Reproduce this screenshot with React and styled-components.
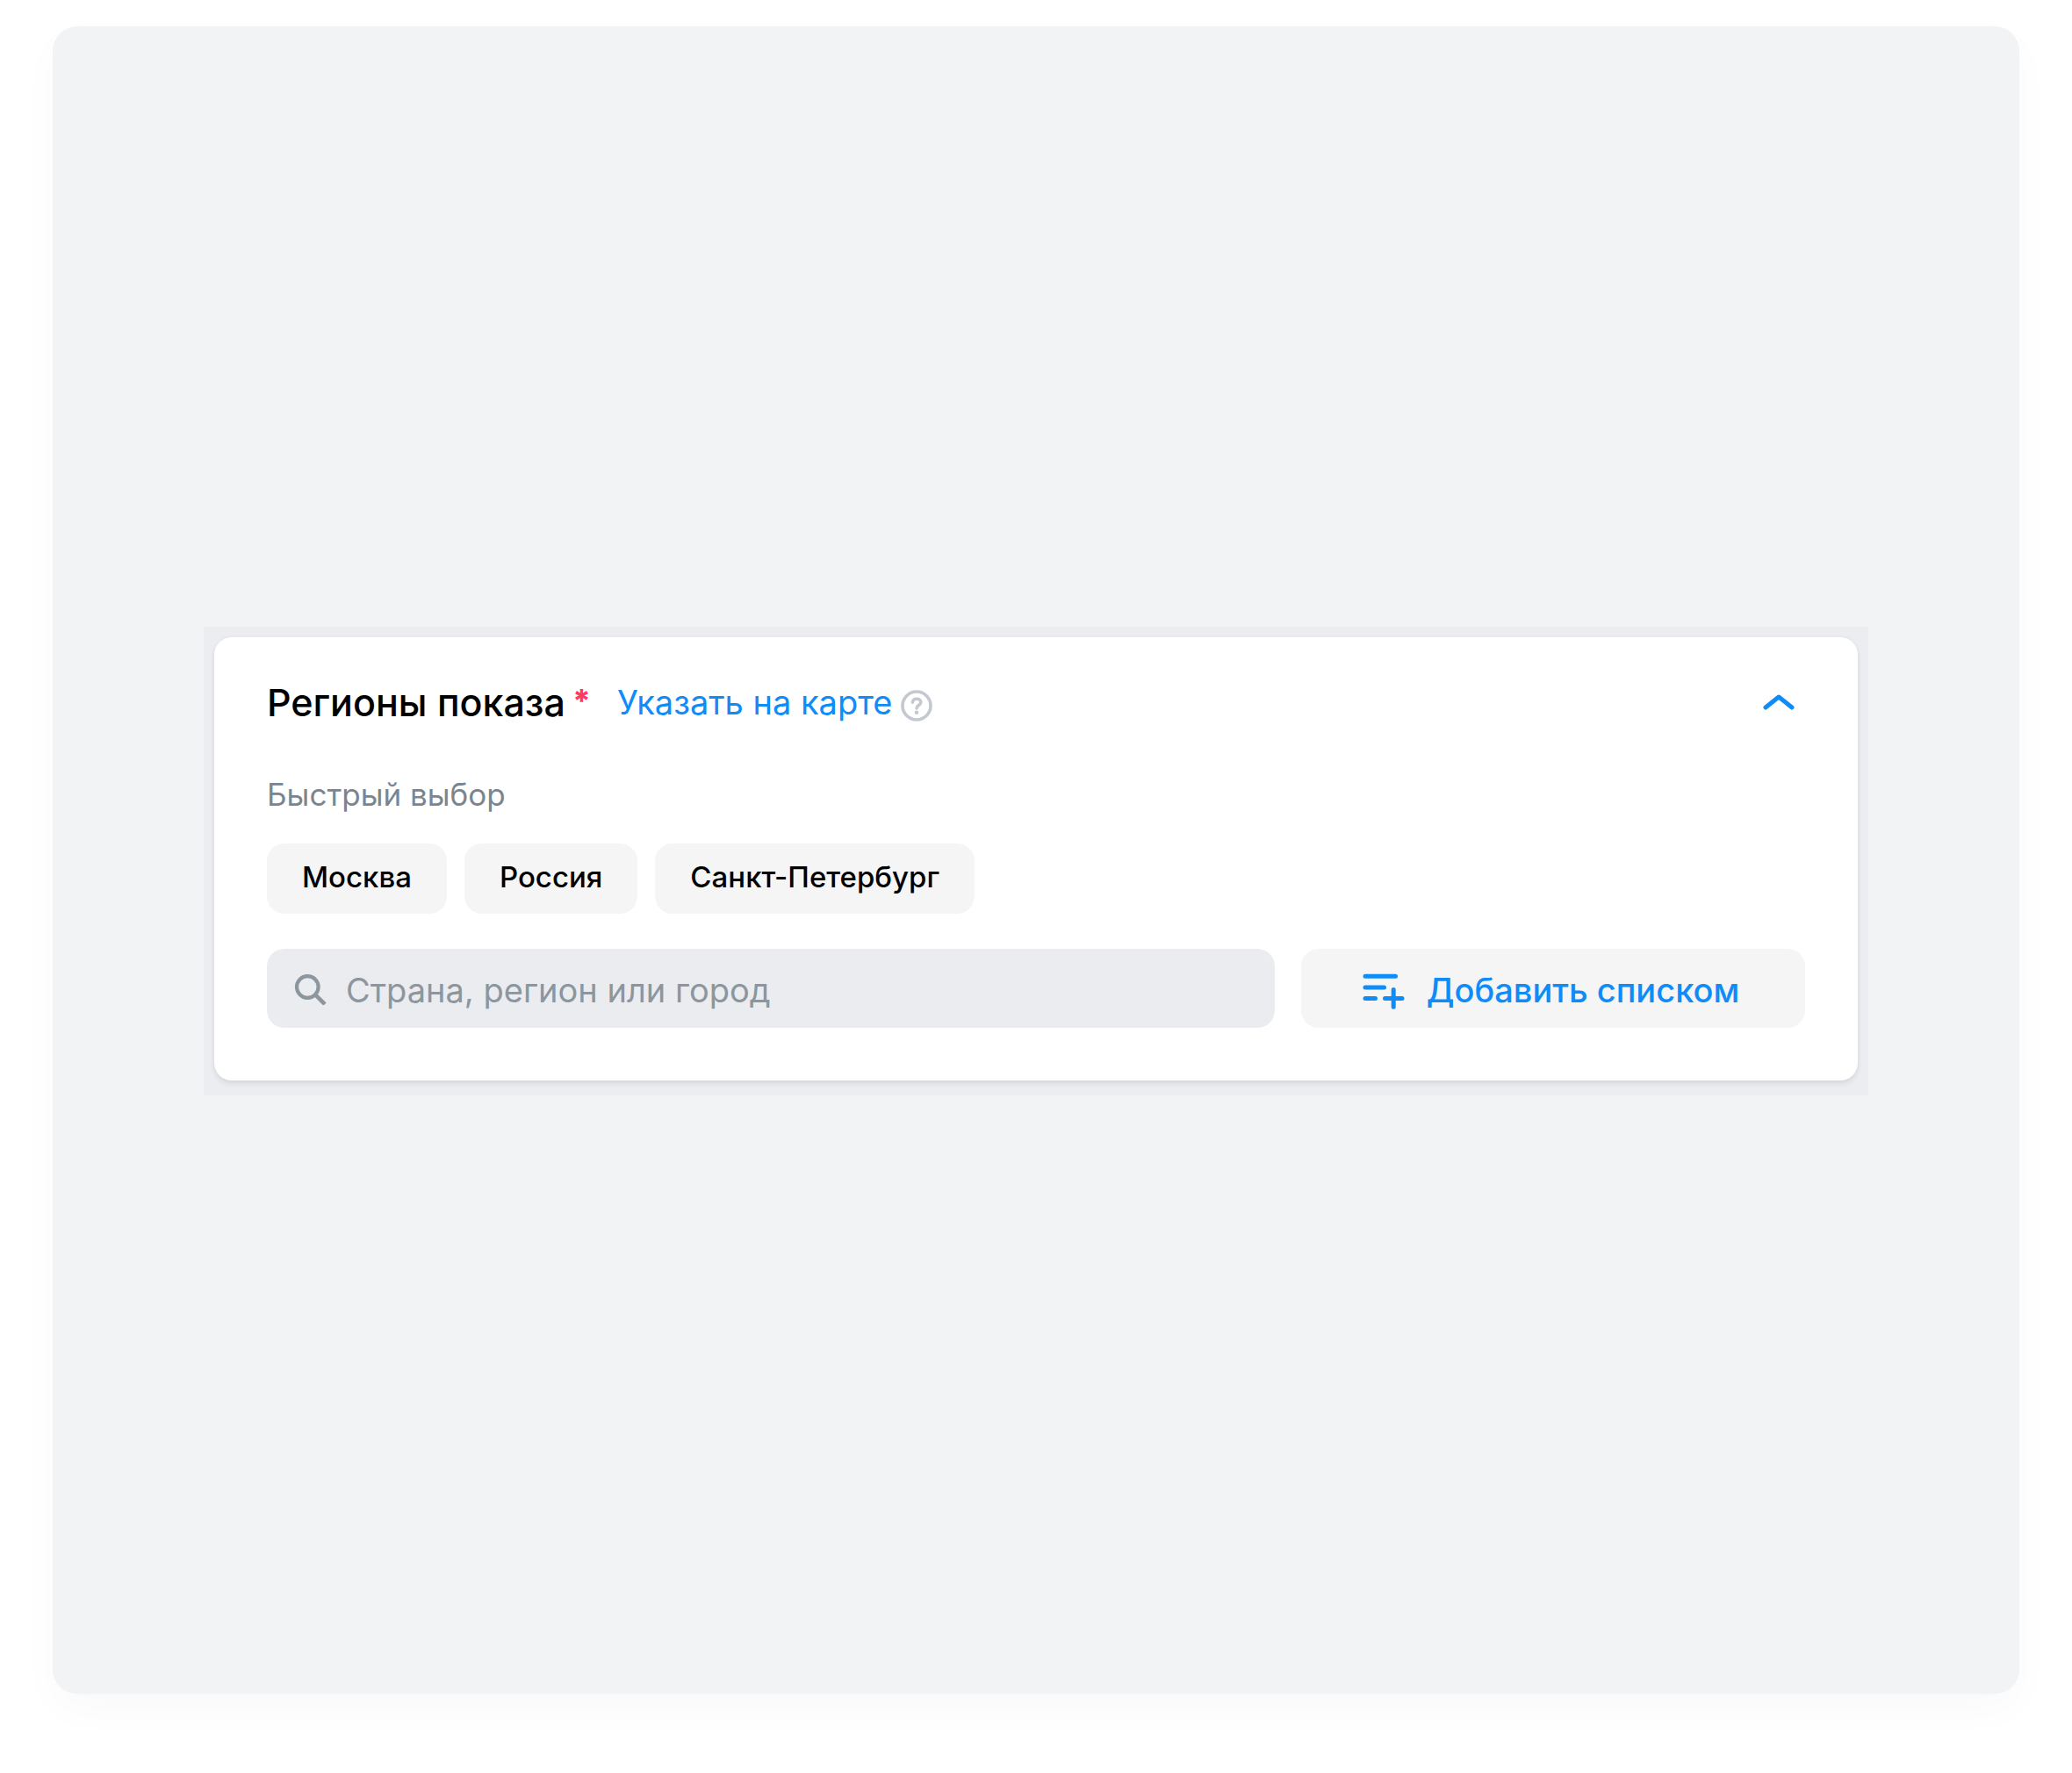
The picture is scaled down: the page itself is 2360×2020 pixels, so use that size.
// src/App.jsx
import React, { useState } from "react";
import styled, { createGlobalStyle } from "styled-components";

const GlobalStyle = createGlobalStyle`
  * {
    box-sizing: border-box;
  }

  body {
    margin: 0;
    background: #fff;
    font-family: Inter, "Noto Sans", sans-serif;
    color: #000;
  }

  button,
  input {
    font-family: inherit;
  }
`;

const Page = styled.div`
  display: flex;
  min-height: 100vh;
  padding: 30px 60px 90px;
`;

const Stage = styled.main`
  flex: 1;
  display: flex;
  flex-direction: column;
  justify-content: center;
  padding: 2px 172px 0;
  border-radius: 28px;
  background: #f1f3f5;
  box-shadow: 0 18px 48px rgba(0, 0, 0, 0.025);
`;

const Frame = styled.div`
  padding: 12px 12px 17px;
  background: #ebedf0;
`;

const Card = styled.section`
  padding: 44px 60px 60px;
  border-radius: 20px;
  background: #fff;
  box-shadow: 0 0 4px rgba(0, 16, 61, 0.04), 0 4px 6px rgba(0, 16, 61, 0.08);
`;

const Header = styled.header`
  display: flex;
  align-items: center;
  margin-bottom: 55px;
`;

const Title = styled.h2`
  display: flex;
  gap: 8px;
  margin: 0 30px 0 0;
  font-size: 43px;
  line-height: 60px;
  font-weight: 500;
`;

const Required = styled.span`
  color: #ff3962;
  font-size: 36px;
  line-height: 56px;
  font-weight: 800;
`;

const MapLink = styled.a`
  color: #0f8cf7;
  font-size: 38px;
  line-height: 60px;
  text-decoration: none;
`;

const IconButton = styled.button`
  display: flex;
  align-items: center;
  justify-content: center;
  width: ${({ $size }) => $size}px;
  height: ${({ $size }) => $size}px;
  padding: 0;
  border: none;
  background: none;
  color: ${({ $color }) => $color};
  cursor: pointer;
`;

const HelpButton = styled(IconButton)`
  margin: 8px auto 0 10px;
`;

const Caption = styled.p`
  margin: 0 0 36px;
  color: #7b858f;
  font-size: 35px;
  line-height: 40px;
`;

const Chips = styled.div`
  display: flex;
  flex-wrap: wrap;
  gap: 20px;
  margin-bottom: 40px;
`;

const Chip = styled.button`
  height: 80px;
  padding: 0 40px 4px;
  border: none;
  border-radius: 20px;
  background: #f5f5f5;
  color: #000;
  font-size: 33px;
  font-weight: 500;
  cursor: pointer;
`;

const SearchRow = styled.div`
  display: grid;
  grid-template-columns: 2fr 1fr;
  gap: 30px;
`;

const SearchField = styled.label`
  display: flex;
  align-items: center;
  gap: 22px;
  height: 90px;
  padding: 0 30px;
  border-radius: 20px;
  background: #ebecf0;
  color: #8c969f;
`;

const SearchInput = styled.input`
  flex: 1;
  min-width: 0;
  height: 90px;
  padding: 4px 0 0;
  border: none;
  outline: none;
  background: none;
  color: #000;
  font-size: 38px;

  &::placeholder {
    color: #8c969f;
    opacity: 1;
  }
`;

const AddButton = styled.button`
  display: flex;
  align-items: center;
  justify-content: center;
  gap: 24px;
  height: 90px;
  padding: 4px 26px 0 20px;
  border: none;
  border-radius: 20px;
  background: #f5f5f5;
  color: #0f8cf7;
  font-size: 38px;
  font-weight: 500;
  cursor: pointer;
`;

const HelpIcon = () => (
  <svg width="36" height="36" viewBox="0 0 36 36" fill="none" stroke="currentColor" aria-hidden="true">
    <circle cx="18" cy="18" r="16" strokeWidth="3.6" />
    <path d="M13.4 14.2C13.6 11.6 15.5 10.2 18.2 10.2C21 10.2 22.8 11.8 22.8 13.9C22.8 15.7 21.7 16.6 20.3 17.6C18.7 18.6 18.1 19.3 18.1 21" strokeWidth="3.6" strokeLinecap="round" />
    <circle cx="18" cy="25.8" r="2.3" fill="currentColor" stroke="none" />
  </svg>
);

const ChevronIcon = ({ open }) => (
  <svg width="40" height="24" viewBox="0 0 40 24" fill="none" stroke="currentColor" strokeWidth="5" strokeLinecap="round" strokeLinejoin="round" aria-hidden="true">
    <path d={open ? "M5 18L20 6L35 18" : "M5 6L20 18L35 6"} />
  </svg>
);

const SearchIcon = () => (
  <svg width="38" height="38" viewBox="0 0 38 38" fill="none" stroke="currentColor" aria-hidden="true">
    <circle cx="16.3" cy="17.5" r="12.3" strokeWidth="4.2" />
    <path d="M25.2 26.4L36 37.2" strokeWidth="4.6" />
  </svg>
);

const ListAddIcon = () => (
  <svg width="50" height="44" viewBox="0 0 50 44" fill="none" stroke="currentColor" strokeWidth="5" strokeLinecap="round" aria-hidden="true">
    <path d="M4 6.3H38.5M4 19H25.5M4 31.6H15.5M26.5 31.6H46M36.2 21.4V41.2" />
  </svg>
);

const cities = ["Москва", "Россия", "Санкт-Петербург"];

export default function App() {
  const [open, setOpen] = useState(true);
  const [query, setQuery] = useState("");

  return (
    <>
      <GlobalStyle />
      <Page>
        <Stage>
          <Frame>
            <Card>
              <Header>
                <Title>
                  Регионы показа
                  <Required>*</Required>
                </Title>
                <MapLink href="#map">Указать на карте</MapLink>
                <HelpButton type="button" $size={36} $color="#c4c8d0" aria-label="Подсказка">
                  <HelpIcon />
                </HelpButton>
                <IconButton
                  type="button"
                  $size={60}
                  $color="#0f8cf7"
                  aria-label="Свернуть"
                  aria-expanded={open}
                  onClick={() => setOpen(!open)}
                >
                  <ChevronIcon open={open} />
                </IconButton>
              </Header>
              {open && (
                <>
                  <Caption>Быстрый выбор</Caption>
                  <Chips>
                    {cities.map((city) => (
                      <Chip key={city} type="button" onClick={() => setQuery(city)}>
                        {city}
                      </Chip>
                    ))}
                  </Chips>
                  <SearchRow>
                    <SearchField>
                      <SearchIcon />
                      <SearchInput
                        type="text"
                        aria-label="Страна, регион или город"
                        placeholder="Страна, регион или город"
                        value={query}
                        onChange={(e) => setQuery(e.target.value)}
                      />
                    </SearchField>
                    <AddButton type="button">
                      <ListAddIcon />
                      Добавить списком
                    </AddButton>
                  </SearchRow>
                </>
              )}
            </Card>
          </Frame>
        </Stage>
      </Page>
    </>
  );
}
